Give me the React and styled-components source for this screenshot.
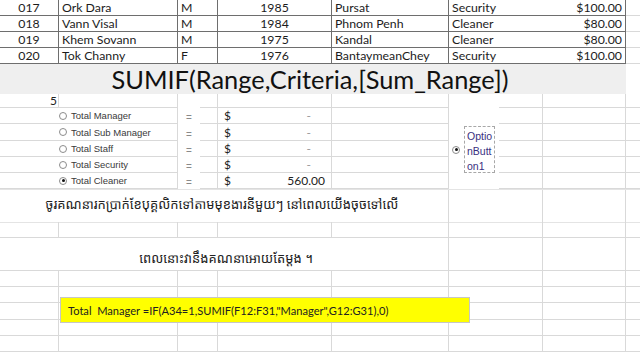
import React from 'react';
import styled, { createGlobalStyle, css } from 'styled-components';

const COLS = '59px 119px 22px 18px 114px 117px 50px 44px 83px 14px';
const GRID = '#d9d9d9';
const DARK = '#6e6e6e';

const Global = createGlobalStyle`
  html, body { margin: 0; padding: 0; background: #fff; }
  body { width: 640px; height: 352px; overflow: hidden; font-family: Lato, "Liberation Sans", sans-serif; }
  * { box-sizing: border-box; }
`;

const Page = styled.div`
  position: relative;
  width: 640px;
  height: 352px;
  overflow: hidden;
  display: flex;
  flex-direction: column;
`;

const Sheet = styled.div`
  display: grid;
  grid-template-columns: ${COLS};
  grid-template-rows: ${(p) => p.$rows};
`;

const lines = css`
  border-right: ${(p) => (p.$right ? `1px solid ${p.$right}` : 'none')};
  border-bottom: ${(p) => (p.$bottom ? `1px solid ${p.$bottom}` : 'none')};
  grid-column: span ${(p) => p.$span || 1};
  grid-row: span ${(p) => p.$rowSpan || 1};
`;

const DataCell = styled.div`
  ${lines};
  font-size: 12.3px;
  line-height: 15px;
  color: #1c1c1c;
  padding: 0 3px;
  text-align: ${(p) => p.$align || 'left'};
  white-space: nowrap;
  overflow: hidden;
`;

const GridCell = styled.div`
  ${lines};
`;

const TitleBand = styled.div`
  width: 626px;
  height: 36px;
  background: #efefef;
  display: flex;
  align-items: center;
  justify-content: center;
  padding-right: 6px;
  font-size: 25.4px;
  color: #111;
`;

const SeamBand = styled.div`
  height: 2px;
  background: #e4e4e4;
`;

const NumberCell = styled(GridCell)`
  font-size: 12px;
  line-height: 14px;
  text-align: right;
  padding-right: 1px;
  color: #222;
`;

const OptionLabel = styled(GridCell)`
  display: flex;
  align-items: center;
  gap: 4px;
  font-family: "Liberation Sans", sans-serif;
  font-size: 9.5px;
  color: #3a3a3a;
  white-space: nowrap;
`;

const Radio = styled.span`
  position: relative;
  flex: none;
  width: 8px;
  height: 8px;
  border-radius: 50%;
  border: 1px solid #8c8c8c;
  background: #fff;
  ${(p) =>
    p.$checked &&
    css`
      &::after {
        content: '';
        position: absolute;
        left: 1.5px;
        top: 1.5px;
        width: 3px;
        height: 3px;
        border-radius: 50%;
        background: #111;
      }
    `}
`;

const EqualCell = styled(GridCell)`
  display: flex;
  justify-content: center;
  align-items: center;
  padding-top: 3px;
  font-family: "Liberation Sans", sans-serif;
  font-size: 10px;
  color: #8a8a8a;
`;

const MoneyCell = styled(GridCell)`
  display: flex;
  justify-content: space-between;
  align-items: center;
  padding: 0 6px;
  font-size: 12px;
  color: #222;
`;

const Dash = styled.span`
  color: #999;
  margin-right: 14px;
`;

const ControlCell = styled(GridCell)`
  display: flex;
  align-items: flex-start;
  padding: 32px 0 0 3px;
  background: #fff;
`;

const ControlRow = styled.div`
  display: flex;
  align-items: center;
  gap: 4px;
`;

const ControlCaption = styled.div`
  width: 31px;
  height: 47px;
  border: 1px dashed #a8a8a8;
  padding: 2px 0 0 2px;
  font-family: "Liberation Sans", sans-serif;
  font-size: 10.5px;
  line-height: 15px;
  color: #3a2f80;
  word-break: break-all;
`;

const KhmerCell = styled(GridCell)`
  display: flex;
  align-items: center;
  justify-content: center;
  padding: ${(p) => p.$pad || '0'};
  font-family: "Noto Sans Khmer", "Noto Serif Khmer", "Khmer OS", "Khmer OS System", sans-serif;
  font-size: 13px;
  color: #222;
  white-space: nowrap;
`;

const Note = styled.div`
  position: absolute;
  left: 60px;
  top: 297px;
  width: 410px;
  height: 26px;
  background: #ffff00;
  border: 1px solid #c6c6c6;
  padding: 0 0 0 7px;
  display: flex;
  align-items: center;
  font-size: 11.1px;
  color: #222;
  white-space: pre;
`;

const data = [
  ['017', 'Ork Dara', 'M', '1985', 'Pursat', 'Security', '$100.00'],
  ['018', 'Vann Visal', 'M', '1984', 'Phnom Penh', 'Cleaner', '$80.00'],
  ['019', 'Khem Sovann', 'M', '1975', 'Kandal', 'Cleaner', '$80.00'],
  ['020', 'Tok Channy', 'F', '1976', 'BantaymeanChey', 'Security', '$100.00'],
];

const options = [
  ['Total Manager', '-', false],
  ['Total Sub Manager', '-', false],
  ['Total Staff', '-', false],
  ['Total Security', '-', false],
  ['Total Cleaner', '560.00', true],
];

function PlainRow() {
  return (
    <>
      <GridCell $right={GRID} $bottom={GRID} />
      <GridCell $right={GRID} $bottom={GRID} />
      <GridCell $span={2} $right={GRID} $bottom={GRID} />
      <GridCell $right={GRID} $bottom={GRID} />
      <GridCell $right={GRID} $bottom={GRID} />
      <GridCell $span={2} $right={GRID} $bottom={GRID} />
      <GridCell $right={GRID} $bottom={GRID} />
      <GridCell $bottom={GRID} />
    </>
  );
}

function KhmerBlock({ text, pad, rows, bottom }) {
  const b = bottom ? GRID : undefined;
  return (
    <Sheet $rows={rows}>
      <KhmerCell $span={6} $right={GRID} $bottom={b} $pad={pad}>
        {text}
      </KhmerCell>
      <GridCell $span={2} $right={GRID} $bottom={b} />
      <GridCell $right={GRID} $bottom={b} />
      <GridCell $bottom={b} />
    </Sheet>
  );
}

export default function App() {
  return (
    <Page>
      <Global />
      <Sheet $rows="repeat(4, 16px)">
        {data.map((r) => (
          <React.Fragment key={r[0]}>
            <DataCell $align="center" $right={DARK} $bottom={DARK}>{r[0]}</DataCell>
            <DataCell $right={DARK} $bottom={DARK}>{r[1]}</DataCell>
            <DataCell $span={2} $right={DARK} $bottom={DARK}>{r[2]}</DataCell>
            <DataCell $align="center" $right={DARK} $bottom={DARK}>{r[3]}</DataCell>
            <DataCell $right={DARK} $bottom={DARK}>{r[4]}</DataCell>
            <DataCell $span={2} $bottom={DARK}>{r[5]}</DataCell>
            <DataCell $align="right" $right={DARK} $bottom={DARK}>{r[6]}</DataCell>
            <DataCell $bottom={GRID} />
          </React.Fragment>
        ))}
      </Sheet>

      <TitleBand>SUMIF(Range,Criteria,[Sum_Range])</TitleBand>

      <Sheet $rows="14px 16px 17px 16px 16px 16px">
        <NumberCell $right={GRID} $bottom={GRID}>5</NumberCell>
        <GridCell $right={GRID} $bottom={GRID} />
        <GridCell />
        <GridCell $right={GRID} $bottom={GRID} />
        <GridCell $right={GRID} $bottom={GRID} />
        <GridCell $right={GRID} $bottom={GRID} />
        <ControlCell $rowSpan={6}>
          <ControlRow>
            <Radio $checked />
            <ControlCaption>OptionButton1</ControlCaption>
          </ControlRow>
        </ControlCell>
        <GridCell $right={GRID} $bottom={GRID} />
        <GridCell $right={GRID} $bottom={GRID} />
        <GridCell $bottom={GRID} />
        {options.map(([label, value, checked]) => (
          <React.Fragment key={label}>
            <GridCell $bottom={GRID} />
            <OptionLabel $right={GRID} $bottom={GRID}>
              <Radio $checked={checked} />
              {label}
            </OptionLabel>
            <EqualCell>=</EqualCell>
            <GridCell $right={GRID} $bottom={GRID} />
            <MoneyCell $right={GRID} $bottom={GRID}>
              <span>$</span>
              {value === '-' ? <Dash>-</Dash> : <span>{value}</span>}
            </MoneyCell>
            <GridCell $right={GRID} $bottom={GRID} />
            <GridCell $right={GRID} $bottom={GRID} />
            <GridCell $right={GRID} $bottom={GRID} />
            <GridCell $bottom={GRID} />
          </React.Fragment>
        ))}
      </Sheet>

      <SeamBand />
      <KhmerBlock
        rows="32px"
        pad="0 4px 4px 0"
        text="ចូរគណនារកប្រាក់ខែបុគ្គលិកទៅតាមមុខងារនីមួយៗ នៅពេលយើងចុចទៅលើ"
      />
      <SeamBand />
      <Sheet $rows="16px">
        <PlainRow />
      </Sheet>
      <KhmerBlock
        rows="33px"
        pad="8px 0 0 4px"
        bottom
        text="ពេលនោះវានឹងគណនាអោយតែម្តង ។"
      />
      <Sheet $rows="16px 16px 17px 16px 16px">
        <PlainRow />
        <PlainRow />
        <PlainRow />
        <PlainRow />
        <PlainRow />
      </Sheet>

      <Note>{'Total  Manager =IF(A34=1,SUMIF(F12:F31,"Manager",G12:G31),0)'}</Note>
    </Page>
  );
}
